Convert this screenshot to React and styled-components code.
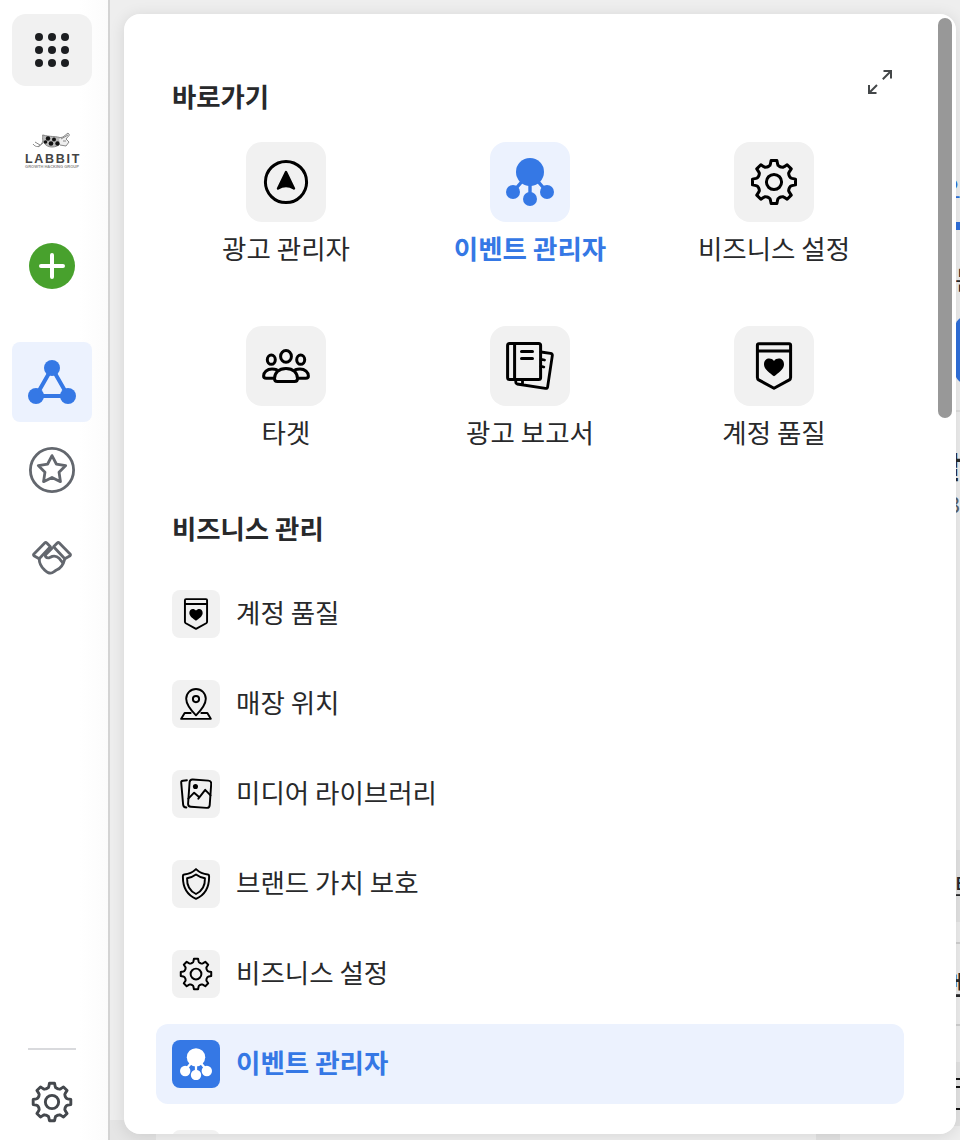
import React from "react";
import styled, { createGlobalStyle, css } from "styled-components";

const GlobalStyle = createGlobalStyle`
  *, *::before, *::after { box-sizing: border-box; }
  body {
    margin: 0;
    overflow: hidden;
    font-family: "Noto Sans CJK KR", "Noto Sans", sans-serif;
    color: #28292b;
  }
`;

const Screen = styled.div`
  display: flex;
  width: 960px;
  height: 1140px;
  overflow: hidden;
  background: #fff;
`;

/* ---------- Sidebar ---------- */

const Sidebar = styled.nav`
  display: flex;
  flex: none;
  flex-direction: column;
  align-items: center;
  width: 110px;
  padding: 14px 4px 14px 0;
  border-right: 2px solid #d3d3d3;
  background: linear-gradient(to right, #fff 80px, #fbfbfb 108px);
`;

const NavButton = styled.button`
  display: flex;
  align-items: center;
  justify-content: center;
  flex: none;
  width: 80px;
  height: ${(p) => p.$height || 80}px;
  margin: ${(p) => p.$gap || 0}px 0 0;
  padding: 0;
  border: 0;
  border-radius: ${(p) => p.$radius || 8}px;
  color: ${(p) => p.$color || "inherit"};
  background: ${(p) => p.$bg || "transparent"};
  svg { display: block; overflow: visible; }
`;

const Brand = styled.div`
  display: flex;
  flex-direction: column;
  align-items: center;
  width: 60px;
  height: 40px;
  margin-top: 44px;
  svg { display: block; }
`;

const BrandName = styled.span`
  margin: 1px -2px 0 0;
  font: 700 12.5px/12px "Liberation Sans", sans-serif;
  letter-spacing: 1.7px;
  color: #444;
`;

const BrandLine = styled.span`
  height: 4px;
  font: 700 4px/4px "Liberation Sans", sans-serif;
  letter-spacing: 0;
  white-space: nowrap;
  color: #8d8d8d;
`;

const Spacer = styled.div`
  flex: 1;
`;

const Divider = styled.div`
  width: 48px;
  height: 2px;
  background: #d9dadd;
`;

/* ---------- Page under the menu ---------- */

const Workspace = styled.main`
  position: relative;
  display: flex;
  flex: 1;
  justify-content: flex-end;
  min-width: 0;
  overflow: hidden;
  background: #eeeeee;
`;

const Page = styled.div`
  flex: none;
  width: 20px;
  height: 1140px;
`;

const Band = styled.div`
  display: flex;
  align-items: center;
  height: ${(p) => p.$height}px;
  padding-top: ${(p) => p.$top || 0}px;
  padding-bottom: ${(p) => p.$bottom || 0}px;
  overflow: hidden;
  background: ${(p) => p.$bg || "transparent"};
  ${(p) => p.$line && css`border-bottom: 2px solid ${p.$line};`}
`;

const Fragment = styled.span`
  flex: none;
  margin-left: ${(p) => p.$start}px;
  font-size: ${(p) => p.$size || 26}px;
  font-weight: ${(p) => p.$weight || 400};
  line-height: 1;
  white-space: nowrap;
  color: ${(p) => p.$color || "#28292b"};
`;

const BlueButton = styled.div`
  flex: none;
  width: 60px;
  height: 68px;
  margin-left: 15px;
  border-radius: 12px;
  background: #3070dc;
`;

const MenuLines = styled.div`
  width: 20px;
  height: 32px;
  border: solid #111;
  border-width: 2px 0;
  &::before {
    content: "";
    display: block;
    height: 2px;
    margin-top: 6px;
    background: #111;
  }
`;

const Footing = styled.div`
  display: flex;
  position: absolute;
  left: 0;
  bottom: 0;
  width: 730px;
  height: 20px;
  background: linear-gradient(to right, #e5e5e5 46px, #f0f0f0 46px, #f0f0f0 706px, #e3e3e3 706px);
`;

/* ---------- Menu panel ---------- */

const Panel = styled.section`
  position: absolute;
  top: 14px;
  left: 14px;
  width: 832px;
  height: 1120px;
  padding: 56px 52px 0 32px;
  overflow: hidden;
  border-radius: 16px;
  background: #fff;
`;

const PanelShadow = styled.div`
  position: absolute;
  top: 14px;
  left: 14px;
  width: 832px;
  height: 1120px;
  border-radius: 16px;
  box-shadow: 0 2px 16px rgba(0, 0, 0, 0.11);
`;

const Scrollbar = styled.div`
  position: absolute;
  top: 4px;
  right: 4px;
  width: 14px;
  height: 400px;
  border-radius: 7px;
  background: #989898;
`;

const PanelHead = styled.header`
  display: flex;
  justify-content: space-between;
  height: 72px;
  padding: 0 12px 0 16px;
  svg { display: block; }
`;

const Heading = styled.h2`
  margin: 0;
  font-size: 26.4px;
  font-weight: 700;
  line-height: 36px;
  ${(p) => p.$offset && css`padding-top: ${p.$offset}px;`}
`;

const ShortcutGrid = styled.div`
  display: grid;
  grid-template-columns: repeat(3, 244px);
  grid-auto-rows: 184px;
  padding-left: 8px;
`;

const Shortcut = styled.a`
  display: flex;
  flex-direction: column;
  align-items: center;
  font-size: 26.5px;
  font-weight: ${(p) => (p.$active ? 700 : 400)};
  line-height: 36px;
  white-space: nowrap;
  color: ${(p) => (p.$active ? "#3578e5" : "inherit")};
`;

const Tile = styled.span`
  display: flex;
  align-items: center;
  justify-content: center;
  width: 80px;
  height: 80px;
  margin-bottom: 8px;
  border-radius: 16px;
  color: ${(p) => (p.$active ? "#3578e5" : "#000")};
  background: ${(p) => (p.$active ? "#ecf2fe" : "#f1f1f1")};
`;

const MenuHeading = styled(Heading)`
  height: 64px;
  padding: 0 0 0 16px;
`;

const MenuItem = styled.a`
  display: flex;
  align-items: center;
  width: 748px;
  height: 80px;
  margin-bottom: 10px;
  padding: 0 16px;
  border-radius: 12px;
  font-size: 26.5px;
  font-weight: ${(p) => (p.$active ? 700 : 400)};
  line-height: 36px;
  color: ${(p) => (p.$active ? "#3578e5" : "inherit")};
  background: ${(p) => (p.$active ? "#ecf2fe" : "transparent")};
`;

const SmallTile = styled.span`
  display: flex;
  align-items: center;
  justify-content: center;
  flex: none;
  width: 48px;
  height: 48px;
  margin-right: 16px;
  border-radius: 8px;
  color: ${(p) => (p.$active ? "#fff" : "#000")};
  background: ${(p) => (p.$active ? "#3578e5" : "#f1f1f1")};
`;

const MenuLabel = styled.span`
  padding-bottom: 5px;
`;

/* ---------- Icons ---------- */

const Svg = ({ size = 48, box = 48, sw = 3, children }) => (
  <svg
    width={size}
    height={size}
    viewBox={`0 0 ${box} ${box}`}
    fill="none"
    stroke="currentColor"
    strokeWidth={sw}
    strokeLinecap="round"
    strokeLinejoin="round"
  >
    {children}
  </svg>
);

const gearPath = (() => {
  const tooth = [[-5.6, 15.5], [-4.1, 16.6], [-3.6, 18], [-2.9, 21.5], [2.9, 21.5], [3.6, 18], [4.1, 16.6], [5.6, 15.5]];
  const points = [];
  for (let i = 0; i < 8; i += 1) {
    const a = (i * Math.PI) / 4;
    tooth.forEach(([x, r]) => {
      const px = 24 + x * Math.cos(a) + r * Math.sin(a);
      const py = 24 + x * Math.sin(a) - r * Math.cos(a);
      points.push(`${px.toFixed(2)} ${py.toFixed(2)}`);
    });
  }
  return `M${points.join("L")}Z`;
})();

const GearIcon = ({ size, sw }) => (
  <Svg size={size} sw={sw}>
    <path d={gearPath} />
    <circle cx="24" cy="24" r="7.6" />
  </Svg>
);

const CompassIcon = () => (
  <Svg>
    <circle cx="24" cy="24" r="20.6" />
    <path d="M24 14 L32 30.5 Q28 28 24 28 Q20 28 16 30.5Z" fill="currentColor" strokeWidth="2.4" />
  </Svg>
);

const EventsIcon = ({ size }) => (
  <Svg size={size}>
    <path d="M24 14L7 34M24 14L41 34M24 14V41" strokeWidth="3.4" />
    <g fill="currentColor" stroke="none">
      <circle cx="24" cy="14" r="14" />
      <circle cx="7" cy="34" r="7" />
      <circle cx="24" cy="41" r="7" />
      <circle cx="41" cy="34" r="7" />
    </g>
  </Svg>
);

const EventsSmallIcon = () => (
  <Svg size={32}>
    <path d="M24 14L7 34M24 14L41 34M24 14V41" strokeWidth="3.4" />
    <g fill="currentColor" stroke="none">
      <circle cx="24" cy="14" r="13.8" />
      <circle cx="7.8" cy="34.5" r="7.8" />
      <circle cx="24" cy="40.5" r="7.8" />
      <circle cx="40.2" cy="34.5" r="7.8" />
    </g>
  </Svg>
);

const PeopleIcon = () => (
  <Svg>
    <ellipse cx="24" cy="14.4" rx="5.4" ry="5.9" />
    <ellipse cx="9.3" cy="17.7" rx="4" ry="4.6" />
    <ellipse cx="38.7" cy="17.7" rx="4" ry="4.6" />
    <path d="M24 26.4C31.5 26.4 35.4 31 35.5 36.5C35.5 38.6 34.6 39.5 32.6 39.5H15.4C13.4 39.5 12.5 38.6 12.5 36.5C12.6 31 16.5 26.4 24 26.4Z" />
    <path d="M14.5 27.7C12.8 27 11.3 27 10 27C5 27 1.6 30.3 1.6 34C1.6 35.6 2.6 36.3 4.2 36.3H11M33.5 27.7C35.2 27 36.7 27 38 27C43 27 46.4 30.3 46.4 34C46.4 35.6 45.4 36.3 43.8 36.3H37" />
  </Svg>
);

const ReportIcon = () => (
  <Svg>
    <rect x="1.6" y="1.6" width="33" height="36" rx="2" />
    <path d="M8.6 2V37.4M15.5 9.4H26.5M15.5 16.4H26.5" />
    <path d="M35 10L44.5 11.3Q46.6 11.6 46.3 13.7L41.6 45Q41.3 46.8 39.4 46.4L11 42Q9.5 41.7 9.8 39V38M16.5 38V41.5M35 17.3L38.5 18M35 24.4L37.8 25" strokeWidth="2.8" />
  </Svg>
);

const BadgeIcon = ({ size, sw }) => (
  <Svg size={size} sw={sw}>
    <path d="M9 1.7H39Q40.6 1.7 40.6 3.3V35.5Q40.6 37 39.3 37.9L24 46.3L8.7 37.9Q7.4 37 7.4 35.5V3.3Q7.4 1.7 9 1.7ZM7.4 9H40.6" />
    <path d="M24 34.3C20 31 14 27.4 14 22.4C14 15.6 21 15 24 18.9C27 15 34 15.6 34 22.4C34 27.4 28 31 24 34.3Z" fill="currentColor" stroke="none" />
  </Svg>
);

const PlaceIcon = () => (
  <Svg size={32} sw={2.9}>
    <path d="M24 41C17 34 9.3 26 9.3 16.2C9.3 8 15.7 1.6 24 1.6S38.7 8 38.7 16.2C38.7 26 31 34 24 41Z" />
    <circle cx="24" cy="16.6" r="4.7" />
    <path d="M16 37.5H7L1.8 46.3H46.2L41 37.5H32" />
  </Svg>
);

const MediaIcon = () => (
  <Svg size={32} sw={2.9}>
    <rect x="13.2" y="3" width="32.5" height="41" rx="4.5" transform="rotate(4 29 24)" />
    <circle cx="23.2" cy="12.8" r="3.8" fill="currentColor" stroke="none" />
    <path d="M12.5 31L21.2 22L29 29L37.8 17.7L45.8 26M27.5 31L30.8 27" />
    <path d="M10.4 3.3L4.5 4Q1.5 4.3 1.8 7L4.7 40Q5 44 9.5 44.3" />
  </Svg>
);

const ShieldIcon = () => (
  <Svg size={32} sw={2.9}>
    <path d="M24 1.7C19 6.6 12.5 9.3 6.4 9.7Q4.5 9.8 4.4 11.7C3.8 28 9.5 40 24 46.3C38.5 40 44.2 28 43.6 11.7Q43.5 9.8 41.6 9.7C35.5 9.3 29 6.6 24 1.7Z" />
    <path d="M24 9.8C20 12.8 15.5 14.7 10.6 15.4C10.2 26 14 34.2 24 39C34 34.2 37.8 26 37.4 15.4C32.5 14.7 28 12.8 24 9.8Z" />
  </Svg>
);

const TriangleIcon = () => (
  <svg width="48" height="48" viewBox="0 0 48 48">
    <path d="M24 10L8 38H40Z" fill="none" stroke="#3578e5" strokeWidth="4" />
    <g fill="#3578e5">
      <circle cx="24" cy="10" r="8" />
      <circle cx="8" cy="38" r="8" />
      <circle cx="40" cy="38" r="8" />
    </g>
  </svg>
);

const starPath = (() => {
  const pts = [];
  for (let i = 0; i < 10; i += 1) {
    const r = i % 2 ? 7.4 : 14.4;
    const a = (i * Math.PI) / 5;
    pts.push(`${(24 + r * Math.sin(a)).toFixed(2)} ${(24 - r * Math.cos(a)).toFixed(2)}`);
  }
  return `M${pts.join("L")}Z`;
})();

const StarIcon = () => (
  <Svg sw={2.8}>
    <circle cx="24" cy="24" r="21.6" />
    <path d={starPath} />
  </Svg>
);

const HandshakeIcon = () => (
  <Svg size={40} box={40} sw={2.8}>
    <path d="M1.7 16.2L12.7 5.1Q13.7 4.1 14.8 5L18.4 8.8L7.2 20.8L1.9 17.8Q1.1 17 1.7 16.2Z" />
    <path d="M38.3 16.2L27.3 5.1Q26.3 4.1 25.2 5L21.6 8.8L32.8 20.8L38.1 17.8Q38.9 17 38.3 16.2Z" />
    <path d="M7.2 20.8C7.2 26 9.5 29.2 12.5 31.9C15 34.4 16.8 35.2 18.5 35.2C20.8 35.2 22.5 33 24.5 32C28 30.6 31.5 26 32.8 20.8" />
    <path d="M20 10.2L14 16.4C12.4 18.2 14.2 20.4 17.2 19.8L20.3 18.4C23 17.6 25.6 18.8 27.4 20.6L30.4 24.3" />
  </Svg>
);

const RabbitMark = () => (
  <svg width="60" height="22" viewBox="0 0 60 22" fill="none" stroke="#888" strokeWidth="1">
    <path d="M11 14C14 18 18 17 20 13L22 9M13 12L18 15M16 17L21 13M20 5L24 7" />
    <path d="M21 5C27 7 35 6 39 8C41 12 37 17 30 17C24 17 19 12 21 5Z" fill="#bbb" />
    <g fill="#111" stroke="none">
      <circle cx="26" cy="8.5" r="2.2" />
      <circle cx="32" cy="9.5" r="2" />
      <circle cx="23.5" cy="12" r="1.8" />
      <circle cx="29" cy="13.5" r="2.3" />
      <circle cx="35.5" cy="13.5" r="2.2" />
    </g>
    <path d="M37 8L41 7L46 3L47.5 5L44 9L47 12L44 16L38 15" fill="#eee" />
    <path d="M41 11H44M39 9L46 5" />
  </svg>
);

const ExpandIcon = () => (
  <svg width="24" height="24" viewBox="0 0 24 24" fill="none" stroke="#444749" strokeWidth="2">
    <path d="M15.5 1H23V8.5M23 1L14.8 9.2M1 15V23H8.5M1 23L9 15" />
  </svg>
);

/* ---------- Data ---------- */

const shortcuts = [
  { label: "광고 관리자", icon: <CompassIcon /> },
  { label: "이벤트 관리자", icon: <EventsIcon size={48} />, active: true },
  { label: "비즈니스 설정", icon: <GearIcon size={48} sw={3} /> },
  { label: "타겟", icon: <PeopleIcon /> },
  { label: "광고 보고서", icon: <ReportIcon /> },
  { label: "계정 품질", icon: <BadgeIcon size={48} sw={3} /> },
];

const menuItems = [
  { label: "계정 품질", icon: <BadgeIcon size={32} sw={2.9} /> },
  { label: "매장 위치", icon: <PlaceIcon /> },
  { label: "미디어 라이브러리", icon: <MediaIcon /> },
  { label: "브랜드 가치 보호", icon: <ShieldIcon /> },
  { label: "비즈니스 설정", icon: <GearIcon size={34} sw={2.8} /> },
  { label: "이벤트 관리자", icon: <EventsSmallIcon />, active: true },
  { label: "", icon: null },
];

export default function App() {
  return (
    <Screen>
      <GlobalStyle />
      <Sidebar>
        <NavButton $height={72} $radius={14} $bg="#f1f1f1">
          <svg width="34" height="34" viewBox="0 0 34 34" fill="#1c1e21">
            {[4, 17, 30].map((y) =>
              [4, 17, 30].map((x) => <circle key={`${x}-${y}`} cx={x} cy={y} r="4" />)
            )}
          </svg>
        </NavButton>
        <Brand>
          <RabbitMark />
          <BrandName>LABBIT</BrandName>
          <BrandLine>GROWTH HACKING GROUP</BrandLine>
        </Brand>
        <NavButton $gap={56}>
          <svg width="46" height="46" viewBox="0 0 46 46">
            <circle cx="23" cy="23" r="23" fill="#48a12d" />
            <path d="M23 12V34M12 23H34" stroke="#fff" strokeWidth="4" strokeLinecap="round" />
          </svg>
        </NavButton>
        <NavButton $gap={36} $bg="#ecf2fe">
          <TriangleIcon />
        </NavButton>
        <NavButton $gap={8} $color="#63676e">
          <StarIcon />
        </NavButton>
        <NavButton $gap={8} $color="#63676e">
          <HandshakeIcon />
        </NavButton>
        <Spacer />
        <Divider />
        <NavButton $gap={28} $height={48} $color="#44484d">
          <GearIcon size={42} sw={3.3} />
        </NavButton>
      </Sidebar>

      <Workspace>
        <Page>
          <Band $height={158} />
          <Band $height={64} $bottom={6}>
            <Fragment $start={-4} $size={27} $color="#3070dc">오</Fragment>
          </Band>
          <Band $height={8} $bg="#3070dc" />
          <Band $height={86} $top={12}>
            <Fragment $start={15}>는</Fragment>
          </Band>
          <Band $height={68}>
            <BlueButton />
          </Band>
          <Band $height={28} $line="#dedede" />
          <Band $height={78} $top={28}>
            <Fragment $start={-6} $weight={700} $size={30}>발</Fragment>
          </Band>
          <Band $height={32} $bottom={6}>
            <Fragment $start={8} $size={22} $color="#59636d">3</Fragment>
          </Band>
          <Band $height={328} />
          <Band $height={72} $bg="#e3e3e3">
            <Fragment $start={13}>트</Fragment>
          </Band>
          <Band $height={22} $line="#d0d0d0" />
          <Band $height={82} $line="#d0d0d0">
            <Fragment $start={5} $weight={700}>벤</Fragment>
          </Band>
          <Band $height={36} />
          <Band $height={64} $bg="#e3e3e3">
            <MenuLines />
          </Band>
          <Band $height={14} />
        </Page>
        <Footing />
        <PanelShadow />
        <Panel>
          <PanelHead>
            <Heading $offset={8}>바로가기</Heading>
            <ExpandIcon />
          </PanelHead>
          <ShortcutGrid>
            {shortcuts.map((s) => (
              <Shortcut key={s.label} $active={s.active}>
                <Tile $active={s.active}>{s.icon}</Tile>
                {s.label}
              </Shortcut>
            ))}
          </ShortcutGrid>
          <MenuHeading>비즈니스 관리</MenuHeading>
          {menuItems.map((m, i) => (
            <MenuItem key={i} $active={m.active}>
              <SmallTile $active={m.active}>{m.icon}</SmallTile>
              <MenuLabel>{m.label}</MenuLabel>
            </MenuItem>
          ))}
          <Scrollbar />
        </Panel>
      </Workspace>
    </Screen>
  );
}
